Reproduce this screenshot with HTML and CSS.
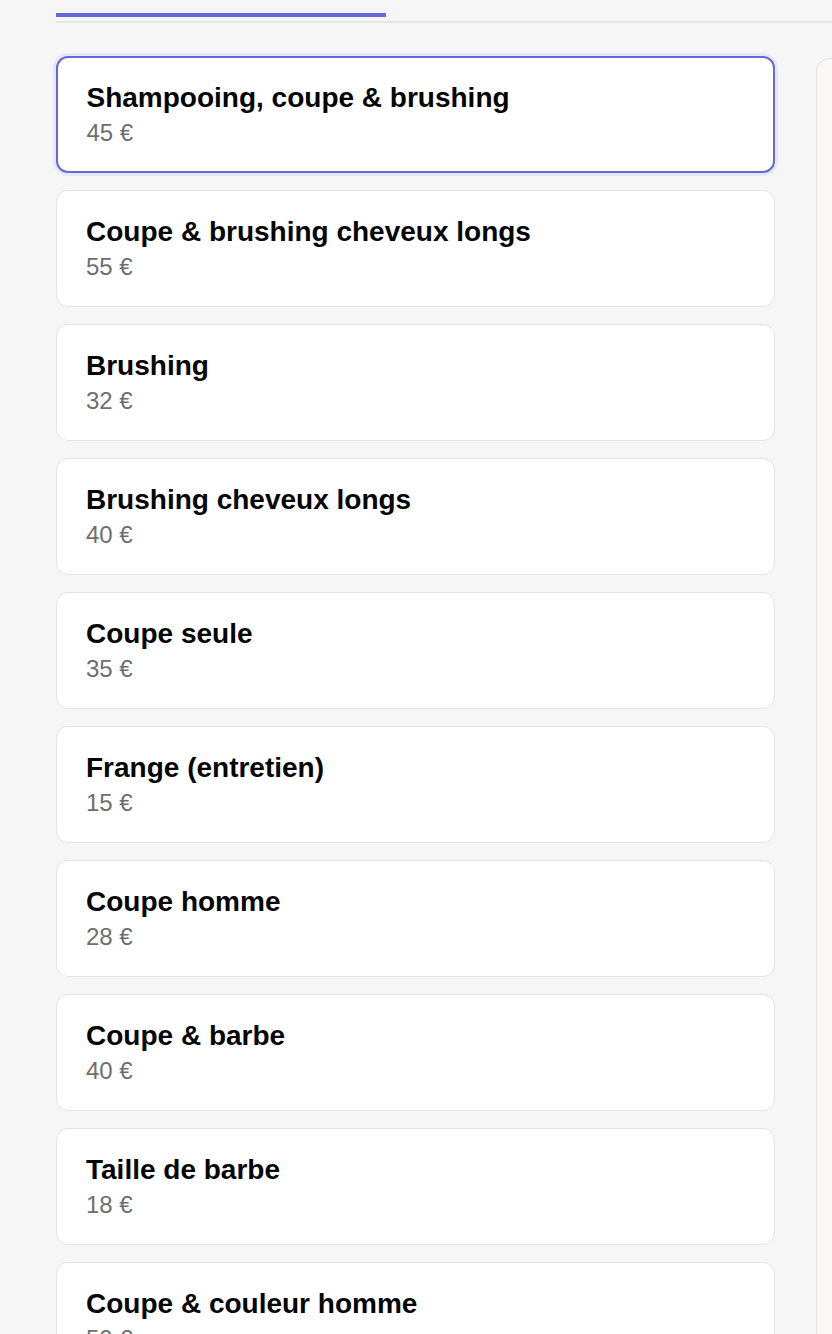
FILE: index.html
```html
<!DOCTYPE html>
<html lang="fr">
<head>
<meta charset="utf-8">
<link rel="stylesheet" href="styles.css">
</head>
<body>
<div class="page">
  <div class="tabs"><div class="tab-active"></div></div>
  <div class="content">
    <div class="list">
      <div class="card selected"><div class="title">Shampooing, coupe &amp; brushing</div><div class="price">45 €</div></div>
      <div class="card"><div class="title">Coupe &amp; brushing cheveux longs</div><div class="price">55 €</div></div>
      <div class="card"><div class="title">Brushing</div><div class="price">32 €</div></div>
      <div class="card"><div class="title">Brushing cheveux longs</div><div class="price">40 €</div></div>
      <div class="card"><div class="title">Coupe seule</div><div class="price">35 €</div></div>
      <div class="card"><div class="title">Frange (entretien)</div><div class="price">15 €</div></div>
      <div class="card"><div class="title">Coupe homme</div><div class="price">28 €</div></div>
      <div class="card"><div class="title">Coupe &amp; barbe</div><div class="price">40 €</div></div>
      <div class="card"><div class="title">Taille de barbe</div><div class="price">18 €</div></div>
      <div class="card"><div class="title">Coupe &amp; couleur homme</div><div class="price">50 €</div></div>
    </div>
    <div class="side"></div>
  </div>
</div>
</body>
</html>
```
FILE: styles.css
```css
html, body {
  margin: 0;
  padding: 0;
  background: #f6f6f6;
  font-family: "Liberation Sans", Arial, sans-serif;
  overflow: hidden;
  height: 1334px;
}
.page {
  padding: 13px 0 0 56px;
}
.tabs {
  border-bottom: 2px solid #e6e6e6;
  height: 8px;
}
.tab-active {
  width: 330px;
  height: 4px;
  background: #646ad9;
}
.content {
  display: flex;
  gap: 41px;
  margin-top: 33px;
}
.list {
  display: flex;
  flex-direction: column;
  gap: 17px;
  width: 719px;
  flex-shrink: 0;
}
.card {
  background: #fff;
  border: 1.5px solid #e4e4e4;
  border-radius: 12px;
  height: 117px;
  box-sizing: border-box;
  padding: 23.5px 29px 0;
}
.card.selected {
  border: 2px solid #6369d6;
  box-shadow: 0 0 0 3px #e6e7f9;
  padding: 23px 28.5px 0;
}
.title {
  font-size: 28px;
  font-weight: bold;
  color: #050505;
  line-height: 34px;
  white-space: nowrap;
}
.price {
  font-size: 24px;
  color: #6e6e6e;
  line-height: 34px;
  margin-top: 1px;
  white-space: nowrap;
}
.side {
  flex: 1;
  margin-top: 2px;
  height: 1400px;
  background: #f9f8f6;
  border: 1.5px solid #e4e4e4;
  border-right: none;
  border-radius: 14px 0 0 14px;
}
```
